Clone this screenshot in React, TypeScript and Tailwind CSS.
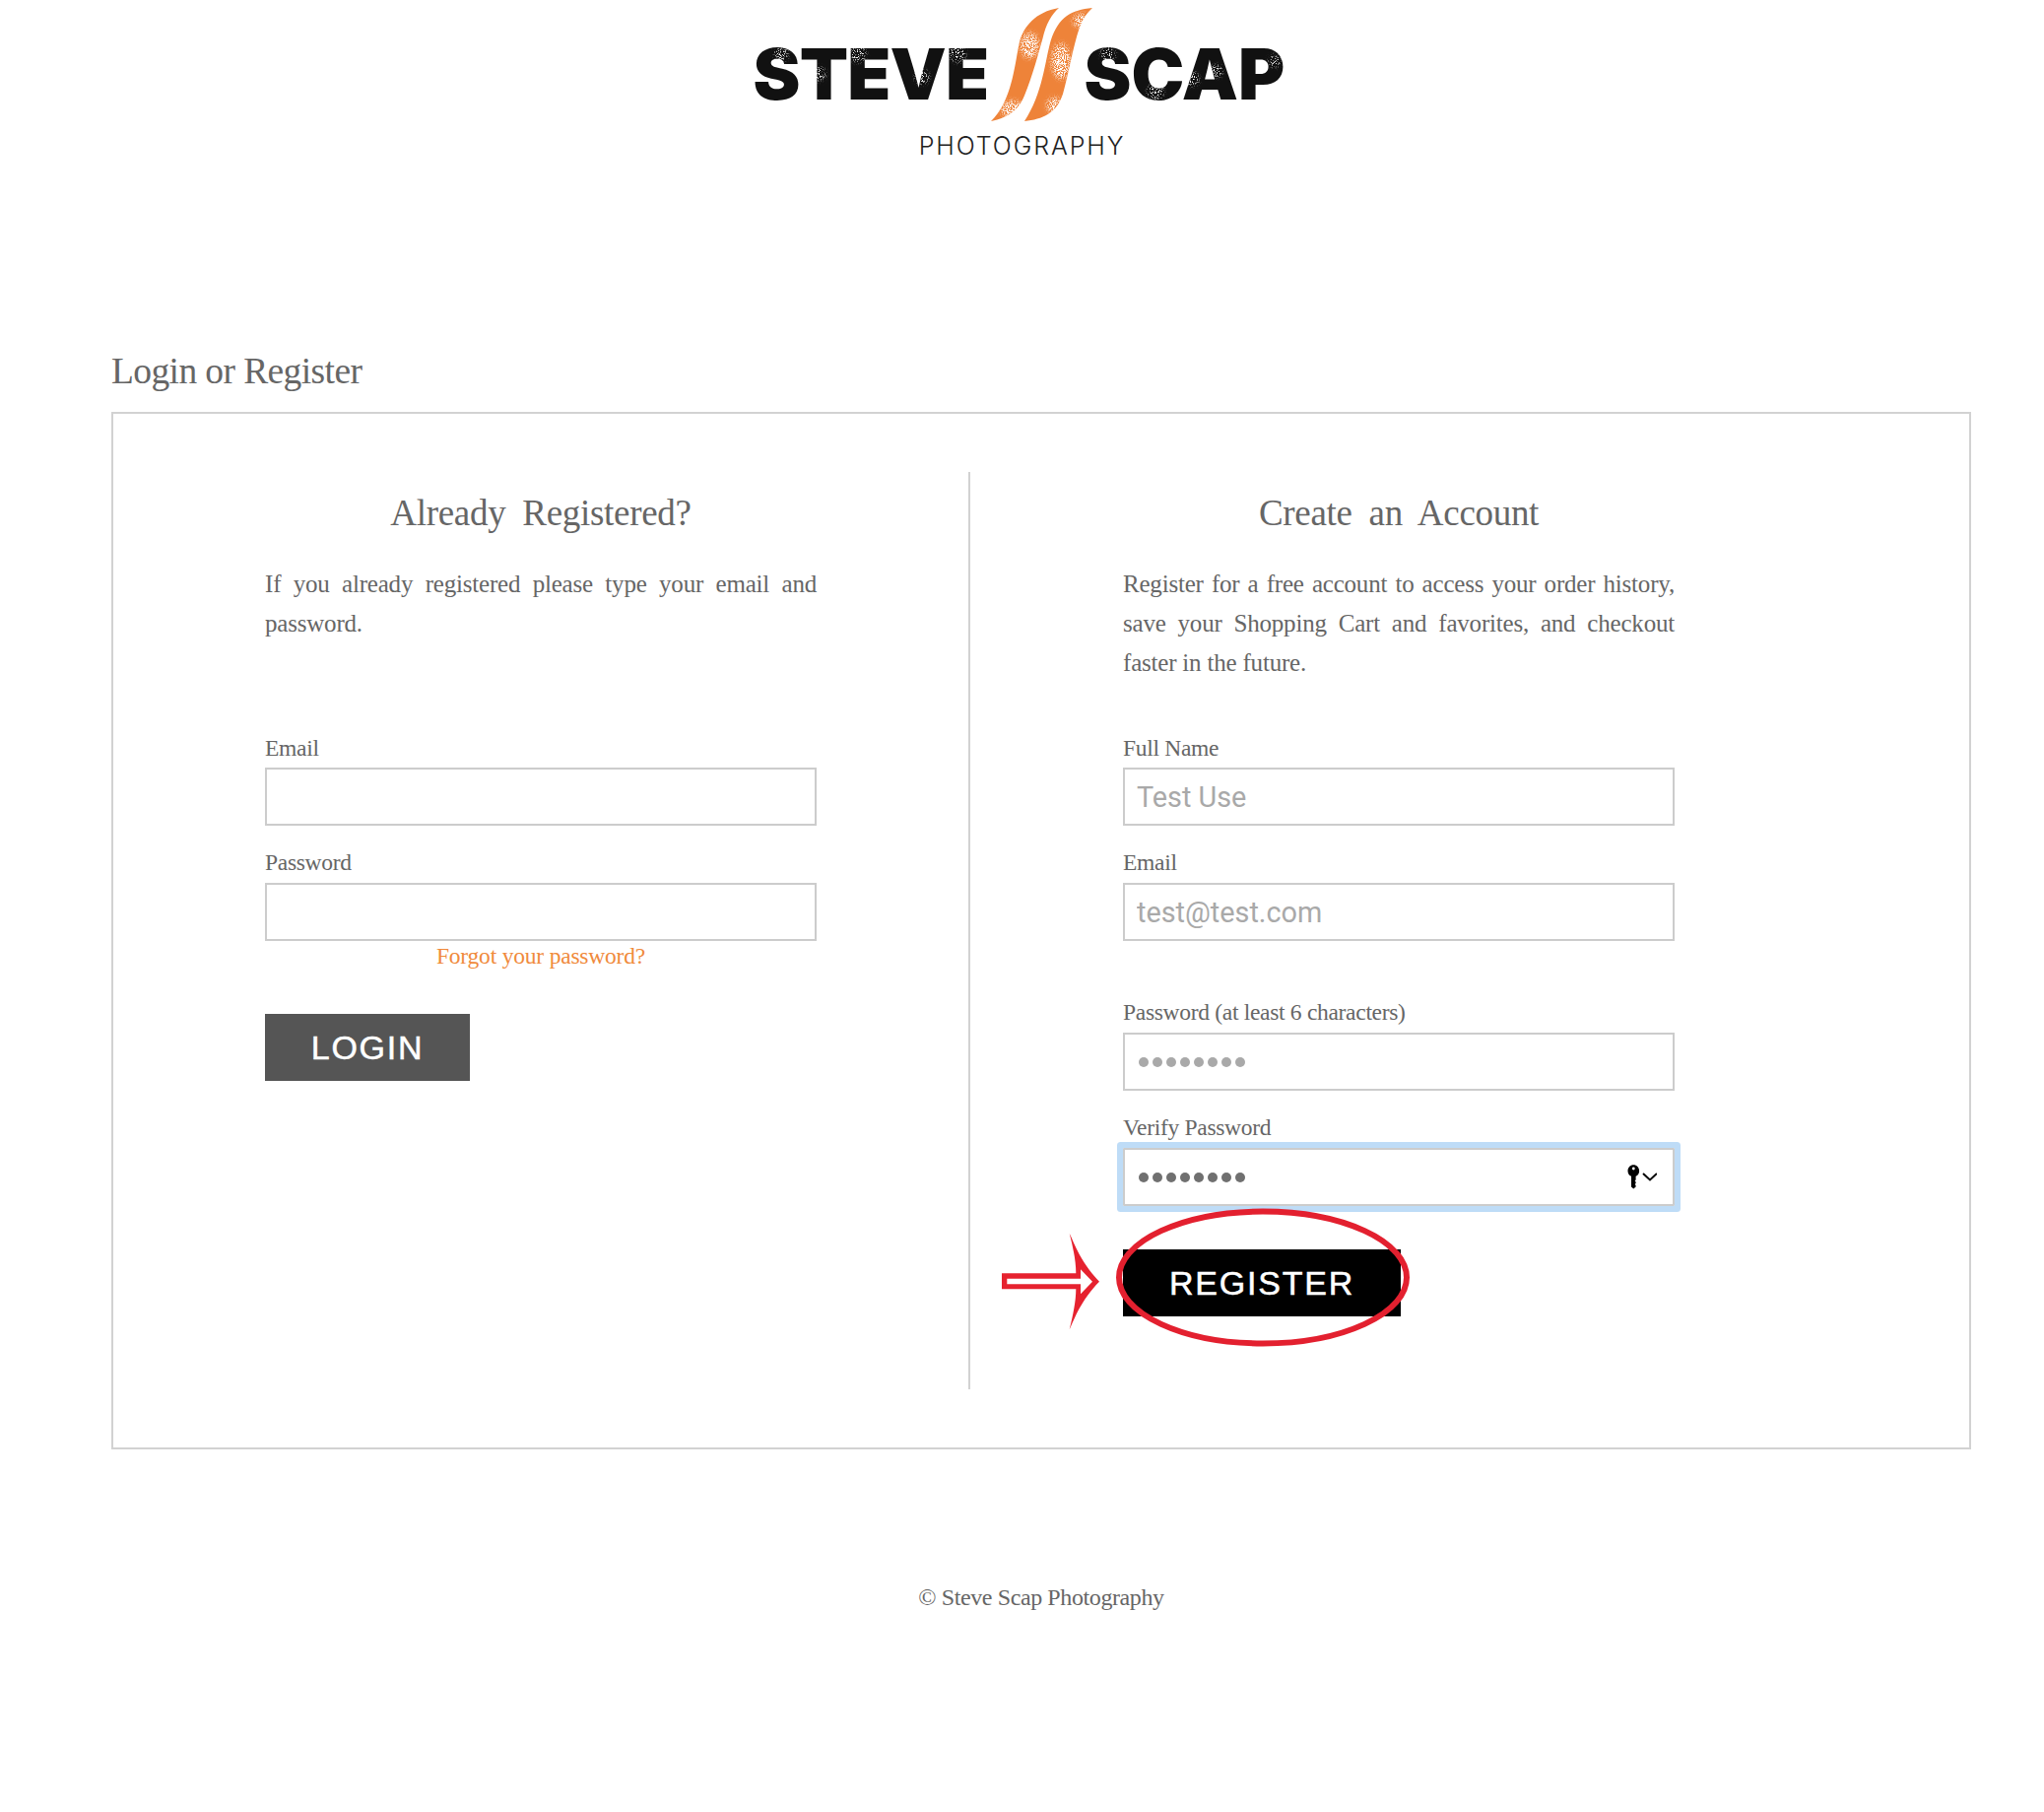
const serif = "font-['Liberation_Serif',serif]";

function Logo() {
  return (
    <div className="flex flex-col items-center h-[310px] pt-[7px]">
      <div className="relative flex items-start h-[116px] w-[538px] ml-[-8px]">
        <span className="font-['Inter',sans-serif] font-black text-[72px] leading-[116px] mt-[10px] tracking-[-0.8px] text-[#111] w-[240px] shrink-0 whitespace-nowrap">STEVE</span>
        <svg width="106" height="116" viewBox="0 0 103 116" preserveAspectRatio="none" className="shrink-0">
          <defs>
            <filter id="b" x="-50%" y="-50%" width="200%" height="200%">
              <feGaussianBlur in="SourceGraphic" stdDeviation="2.5" result="blur" />
              <feTurbulence type="fractalNoise" baseFrequency="0.9" numOctaves="2" seed="4" result="noise" />
              <feColorMatrix in="noise" type="matrix" values="0 0 0 0 1  0 0 0 0 1  0 0 0 0 1  0 0 0 9 -4" result="grain" />
              <feComposite in="blur" in2="grain" operator="in" />
            </filter>
            <clipPath id="c">
              <path d="M68 1C45 5 33 20 29 36C24 60 22 95 1 116C17 113 28 105 34 90C42 70 47 50 52 32C55 18 61 7 68 1Z" />
              <path d="M101 1C80 3 68 10 60 34C54 56 52 88 34 116C52 114 66 108 72 88C77 70 82 40 88 22C91 12 96 6 101 1Z" />
            </clipPath>
          </defs>
          <g clipPath="url(#c)">
            <rect width="103" height="116" fill="#ee8339" />
            <g fill="#fff" filter="url(#b)">
              <ellipse cx="39" cy="39" rx="9" ry="13" />
              <ellipse cx="70" cy="55" rx="9" ry="18" />
              <ellipse cx="22" cy="104" rx="11" ry="9" />
              <ellipse cx="64" cy="100" rx="8" ry="8" />
              <ellipse cx="90" cy="14" rx="8" ry="7" />
            </g>
          </g>
        </svg>
        <span className="font-['Inter',sans-serif] font-black text-[72px] leading-[116px] mt-[10px] ml-[-10px] text-[#111] whitespace-nowrap">SCAP</span>
        <svg className="absolute left-0 top-0" width="538" height="116" viewBox="0 0 538 116">
          <defs>
            <filter id="g" x="-50%" y="-50%" width="200%" height="200%">
              <feGaussianBlur in="SourceGraphic" stdDeviation="2" result="blur" />
              <feTurbulence type="fractalNoise" baseFrequency="0.8" numOctaves="2" seed="9" result="noise" />
              <feColorMatrix in="noise" type="matrix" values="0 0 0 0 1  0 0 0 0 1  0 0 0 0 1  0 0 0 9 -4.7" result="grain" />
              <feComposite in="blur" in2="grain" operator="in" />
            </filter>
          </defs>
          <g fill="#fff" filter="url(#g)">
            <circle cx="28" cy="48" r="7" />
            <circle cx="66" cy="68" r="7" />
            <circle cx="106" cy="48" r="8" />
            <circle cx="171" cy="71" r="7" />
            <circle cx="207" cy="48" r="8" />
            <circle cx="360" cy="48" r="7" />
            <circle cx="408" cy="86" r="8" />
            <circle cx="445" cy="73" r="7" />
            <circle cx="470" cy="65" r="6" />
            <circle cx="529" cy="55" r="6" />
          </g>
        </svg>
      </div>
      <div className="font-['Inter',sans-serif] font-light text-[25px] leading-[30px] mt-[10px] text-[#222] tracking-[1.9px]">PHOTOGRAPHY</div>
    </div>
  );
}

function Label({ children, className = "" }: { children: React.ReactNode; className?: string }) {
  return <div className={`${serif} text-[23.5px] leading-[30px] text-[#666] tracking-[-0.3px] ${className}`}>{children}</div>;
}

function Field({ value }: { value?: string }) {
  return (
    <input
      readOnly
      value={value ?? ""}
      className="block w-full h-[59px] border-2 border-[#ccc] bg-white px-[12px] font-['Roboto',sans-serif] text-[28.8px] text-[#a9a9a9] outline-none"
    />
  );
}

function Dots({ color }: { color: string }) {
  return (
    <div className="flex gap-[4px]">
      {[0, 1, 2, 3, 4, 5, 6, 7].map((i) => (
        <span key={i} className={`w-[10px] h-[10px] rounded-full ${color}`} />
      ))}
    </div>
  );
}

function Para({ children }: { children: React.ReactNode }) {
  return <p className={`${serif} text-[25px] leading-[40px] text-[#666] text-justify tracking-[-0.2px] min-h-[120px] mb-[51px]`}>{children}</p>;
}

function Title({ children }: { children: React.ReactNode }) {
  return <h2 className={`${serif} text-[37px] leading-[84px] mb-[10px] text-[#666] text-center tracking-[-0.3px] [word-spacing:8px]`}>{children}</h2>;
}

export default function App() {
  return (
    <div className="bg-white min-h-[1839px] w-[2075px]">
      <Logo />
      <div className="pl-[113px] w-[2001px]">
        <h1 className={`${serif} text-[37.5px] leading-[82px] pt-[26px] h-[108px] text-[#666] tracking-[-0.6px]`}>Login or Register</h1>
        <div className="border-2 border-[#d2d2d2] py-[59px] flex h-[1053px]">
          <div className="w-[870px] border-r-2 border-[#d2d2d2] pl-[154px] shrink-0">
            <div className="w-[560px]">
              <Title>Already Registered?</Title>
              <Para>If you already registered please type your email and password.</Para>
              <Label className="mb-[5px]">Email</Label>
              <Field />
              <Label className="mt-[22px] mb-[6px]">Password</Label>
              <Field />
              <div className={`${serif} text-[23.5px] leading-[30px] text-[#f08a3c] text-center tracking-[-0.2px]`}>Forgot your password?</div>
              <button className="block mt-[44px] w-[208px] h-[68px] bg-[#555] text-white font-['Liberation_Sans',sans-serif] text-[34px] tracking-[1.7px] [-webkit-text-stroke:0.5px_white]">LOGIN</button>
            </div>
          </div>
          <div className="pl-[155px]">
            <div className="w-[560px]">
              <Title>Create an Account</Title>
              <Para>Register for a free account to access your order history, save your Shopping Cart and favorites, and checkout faster in the future.</Para>
              <Label className="mb-[5px]">Full Name</Label>
              <Field value="Test Use" />
              <Label className="mt-[22px] mb-[6px]">Email</Label>
              <Field value="test@test.com" />
              <Label className="mt-[57px] mb-[6px]">Password (at least 6 characters)</Label>
              <div className="h-[59px] border-2 border-[#ccc] flex items-center pl-[14px]">
                <Dots color="bg-[#a9a9a9]" />
              </div>
              <Label className="mt-[22px] mb-[6px]">Verify Password</Label>
              <div className="h-[59px] border-2 border-[#ccc] flex items-center justify-between pl-[14px] pr-[16px] shadow-[0_0_0_6px_#bedcf7] rounded-[1px]">
                <Dots color="bg-[#707070]" />
                <svg width="32" height="26" viewBox="0 0 32 26">
                  <path fillRule="evenodd" d="M8.3 0.3C5 0.3 2.5 3 2.5 6.4C2.5 8.8 3.8 10.8 6 11.8V22.5L8.3 24.5L10.6 22.5V21L9.6 20L10.6 19V17.5L9.6 16.5L10.6 15.5V11.8C12.8 10.8 14.1 8.8 14.1 6.4C14.1 3 11.6 0.3 8.3 0.3ZM8.3 2.6A1.4 1.4 0 1 1 8.3 5.4A1.4 1.4 0 1 1 8.3 2.6Z" fill="#000" />
                  <path d="M18 9L25 15.5L32 9" fill="none" stroke="#000" strokeWidth="2" />
                </svg>
              </div>
              <div className="relative mt-[44px] w-[282px] h-[68px]">
                <button className="w-full h-full bg-black text-white font-['Liberation_Sans',sans-serif] text-[34px] tracking-[1.8px] [-webkit-text-stroke:0.5px_white]">REGISTER</button>
                <svg className="absolute left-[-7px] top-[-41px] overflow-visible" width="298" height="139" viewBox="0 0 298 139">
                  <ellipse cx="149" cy="69.5" rx="146" ry="67" fill="none" stroke="#e3202f" strokeWidth="6" />
                </svg>
                <svg className="absolute left-[-123px] top-[-17px]" width="100" height="100" viewBox="0 0 100 100">
                  <path d="M68.7 0.7C74 12 80 30 99 49.7C80 69 74 87 68.7 98.3C72 85 75.3 70 75.3 57.3H0V41.3H75.3C75.3 28 72 14 68.7 0.7Z" fill="#e6222f" />
                  <path d="M5.3 46.7H80V37.3L92 49.7L80 62.3V52.3H5.3Z" fill="#fff" />
                </svg>
              </div>
            </div>
          </div>
        </div>
        <div className={`${serif} text-[24px] leading-[30px] text-[#666] text-center mt-[135px] tracking-[-0.4px]`}>© Steve Scap Photography</div>
      </div>
    </div>
  );
}
